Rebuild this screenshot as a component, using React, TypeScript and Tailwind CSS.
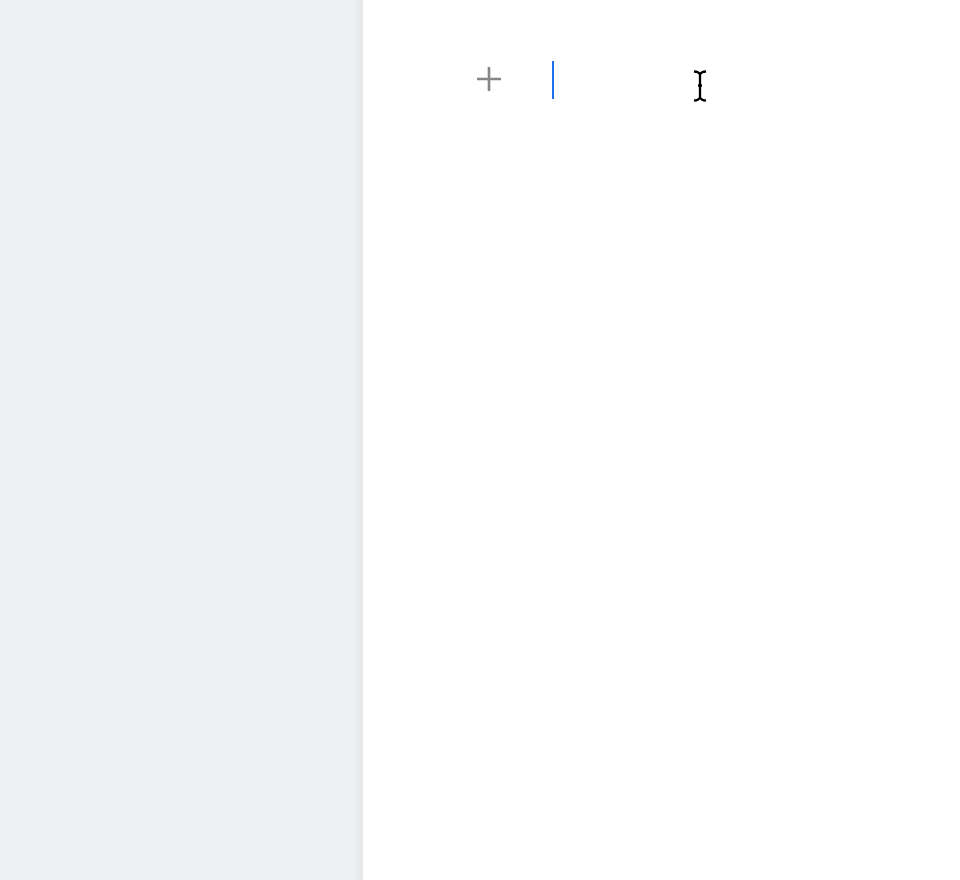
import React from "react";

const PlusIcon = () => (
  <svg width="26" height="26" viewBox="0 0 26 26" fill="none">
    <path d="M13 1v24M1 13h24" stroke="#858585" strokeWidth="2.6" />
  </svg>
);

const IBeam = () => (
  <svg width="16" height="32" viewBox="0 0 16 32" fill="none">
    <path
      d="M2 1.5c3 0 5 1 6 3c1-2 3-3 6-3M8 4.5v10.5M6 15.5h4M8 16v11.5M2 30.5c3 0 5-1 6-3c1 2 3 3 6 3"
      stroke="#000"
      strokeWidth="2.3"
    />
  </svg>
);

export default function App() {
  return (
    <div className="flex h-[880px] w-[960px] bg-white font-['Liberation_Sans',sans-serif]">
      <aside className="w-[363px] shrink-0 bg-[#eff0f2] shadow-[inset_-10px_0_10px_-8px_rgba(0,0,0,0.06)] border-r border-[#e6e7e9]" />
      <main className="flex-1">
        <div className="flex items-start pt-[61px] pl-[113px]">
          <div className="mt-[5px]">
            <PlusIcon />
          </div>
          <div className="ml-[50px] h-[38px] w-[2px] bg-[#1a73e8]" />
          <div className="ml-[138px] mt-[9px]">
            <IBeam />
          </div>
        </div>
      </main>
    </div>
  );
}
